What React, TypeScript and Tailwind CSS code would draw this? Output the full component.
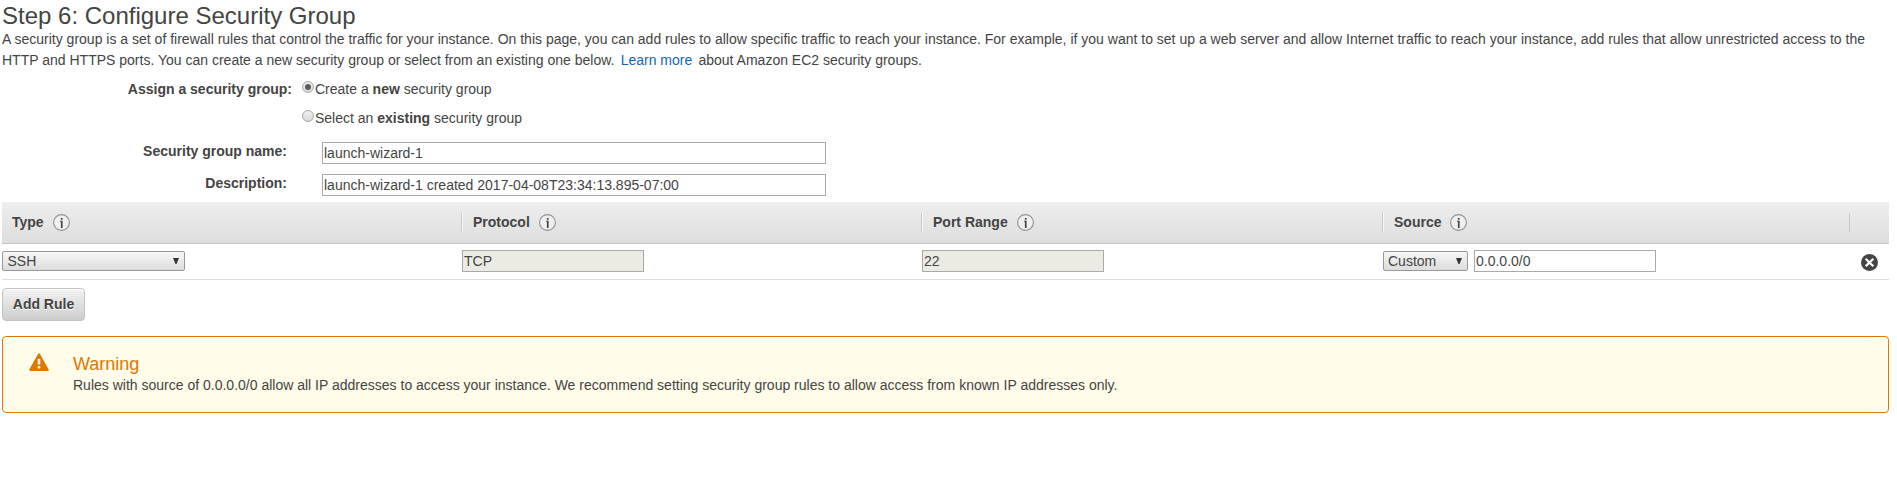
import React from "react";

const inputClass =
  "block h-[22px] rounded-none border border-[#a9a9a9] py-0 pl-px pr-0 text-[14px] leading-5 text-[#444] outline-none";

function InfoIcon() {
  return (
    <svg width="17" height="17" viewBox="0 0 17 17" fill="none">
      <circle cx="8.5" cy="8.5" r="7.9" fill="#efefef" stroke="#929292" strokeWidth="1.1" />
      <path d="M7.9 4h1.7v1.7H7.9zM7.9 6.8h1.7V14H7.9zM7 6.8h1v1H7z" fill="#444" />
    </svg>
  );
}

function HeaderCell({ label, className }: { label: string; className: string }) {
  return (
    <div className={`flex items-center ${className}`}>
      <span className="font-bold">{label}</span>
      <span className="ml-[9px]">
        <InfoIcon />
      </span>
    </div>
  );
}

function Radio({ checked }: { checked?: boolean }) {
  return (
    <span className="mt-[2px] flex h-3 w-3 items-center justify-center self-start rounded-full border border-[#a6a6a6] bg-linear-to-b from-[#f0f0f0] to-[#d9d9d9]">
      {checked && <span className="h-1.5 w-1.5 rounded-full bg-[#5c5c5c]" />}
    </span>
  );
}

function Select({ value, className }: { value: string; className: string }) {
  return (
    <div
      className={`flex h-5 items-center justify-between rounded-[2px] border border-[#999] bg-linear-to-b from-[#f7f7f7] to-[#dcdcdc] pr-[5px] leading-[18px] ${className}`}
    >
      <span>{value}</span>
      <svg width="6" height="6" viewBox="0 0 6 6">
        <path d="M0 0h6L3.5 6h-1z" fill="#333" />
      </svg>
    </div>
  );
}

export default function App() {
  return (
    <main className="flex h-[494px] w-full flex-col bg-white pl-0.5 pr-2 font-['Liberation_Sans',Arial,sans-serif] text-[14px] leading-[21px] text-[#444]">
      <h1 className="h-[29px] text-[24px] leading-8">Step 6: Configure Security Group</h1>
      <p className="h-[42px] [word-spacing:0.015px]">
        A security group is a set of firewall rules that control the traffic for your instance. On this page, you can
        add rules to allow specific traffic to reach your instance. For example, if you want to set up a web server and
        allow Internet traffic to reach your instance, add rules that allow unrestricted access to the HTTP and HTTPS
        ports. You can create a new security group or select from an existing one below.{" "}
        <a className="mx-[2.3px] text-[#1166bb]">Learn more</a> about Amazon EC2 security groups.
      </p>

      <section className="flex h-[131px] flex-col">
        <div className="flex h-[29px] pt-[8px]">
          <div className="w-[290px] text-right font-bold">Assign a security group:</div>
          <div className="ml-[10px] flex gap-px">
            <Radio checked />
            <span>
              Create a <b>new</b> security group
            </span>
          </div>
        </div>
        <div className="flex h-[29px] pt-[8px]">
          <div className="ml-[300px] flex gap-px">
            <Radio />
            <span>
              Select an <b>existing</b> security group
            </span>
          </div>
        </div>
        <div className="mt-[13px] flex h-8">
          <div className="-mt-px w-[285px] text-right font-bold">Security group name:</div>
          <input className={`${inputClass} ml-[35px] w-[504px] bg-white`} defaultValue="launch-wizard-1" />
        </div>
        <div className="flex">
          <div className="-mt-px w-[285px] text-right font-bold">Description:</div>
          <input
            className={`${inputClass} ml-[35px] w-[504px] bg-white`}
            defaultValue="launch-wizard-1 created 2017-04-08T23:34:13.895-07:00"
          />
        </div>
      </section>

      <section>
        <div className="flex h-[42px] items-center border-b border-[#c6c6c6] bg-linear-to-b from-[#eee] to-[#dedede]">
          <HeaderCell label="Type" className="w-[459px] pl-[10px]" />
          <HeaderCell
            label="Protocol"
            className="h-[19px] w-[460px] border-l border-[#c8c8c8] pl-[11px] shadow-[inset_1px_0_0_#f8f8f8]"
          />
          <HeaderCell
            label="Port Range"
            className="h-[19px] w-[461px] border-l border-[#c8c8c8] pl-[11px] shadow-[inset_1px_0_0_#f8f8f8]"
          />
          <HeaderCell
            label="Source"
            className="h-[19px] w-[467px] border-l border-[#c8c8c8] pl-[11px] shadow-[inset_1px_0_0_#f8f8f8]"
          />
          <div className="h-[19px] w-px bg-[#c8c8c8]" />
        </div>
        <div className="flex h-9 items-start border-b border-[#ddd] pt-[6px]">
          <div className="w-[460px] pt-px">
            <Select value="SSH" className="w-[183px] pl-[4.5px]" />
          </div>
          <div className="w-[460px]">
            <input className={`${inputClass} w-[182px] bg-[#ebebe4]`} readOnly defaultValue="TCP" />
          </div>
          <div className="w-[461px]">
            <input className={`${inputClass} w-[182px] bg-[#ebebe4]`} readOnly defaultValue="22" />
          </div>
          <div className="flex w-[478px] gap-[6px]">
            <Select value="Custom" className="mt-px w-[85px] pl-1" />
            <input className={`${inputClass} w-[182px] bg-white`} defaultValue="0.0.0.0/0" />
          </div>
          <svg className="mt-[4px]" width="17" height="17" viewBox="0 0 17 17">
            <circle cx="8.5" cy="8.5" r="8.5" fill="#444" />
            <path d="M4.7 4.7l7.6 7.6M12.3 4.7l-7.6 7.6" stroke="#fff" strokeWidth="2.2" />
          </svg>
        </div>
      </section>

      <button className="mt-2 h-[33px] w-[83px] shrink-0 rounded-[4px] border border-[#c3c3c3] bg-linear-to-b from-[#f3f3f3] to-[#cdcdcd] p-0 font-bold shadow-[inset_0_1px_0_#fff] text-shadow-[0_1px_0_#fff]">
        Add Rule
      </button>

      <section className="mt-[15px] flex h-[77px] shrink-0 rounded-[4px] border border-[#e07700] bg-[#fffce9]">
        <svg className="ml-[26px] mt-[16px]" width="20" height="19" viewBox="0 0 20 19">
          <path d="M10 1.2L18.8 17H1.2z" fill="#e07700" stroke="#e07700" strokeWidth="2" strokeLinejoin="round" />
          <path d="M8.7 6h2.6v5.5H8.7zM8.7 13h2.6v2.6H8.7z" fill="#fffce9" />
        </svg>
        <div className="ml-[24px] pt-[16px]">
          <h2 className="h-[22px] text-[18px] leading-[22px] text-[#e07700]">Warning</h2>
          <p className="[word-spacing:0.015px]">
            Rules with source of 0.0.0.0/0 allow all IP addresses to access your instance. We recommend setting security
            group rules to allow access from known IP addresses only.
          </p>
        </div>
      </section>
    </main>
  );
}
